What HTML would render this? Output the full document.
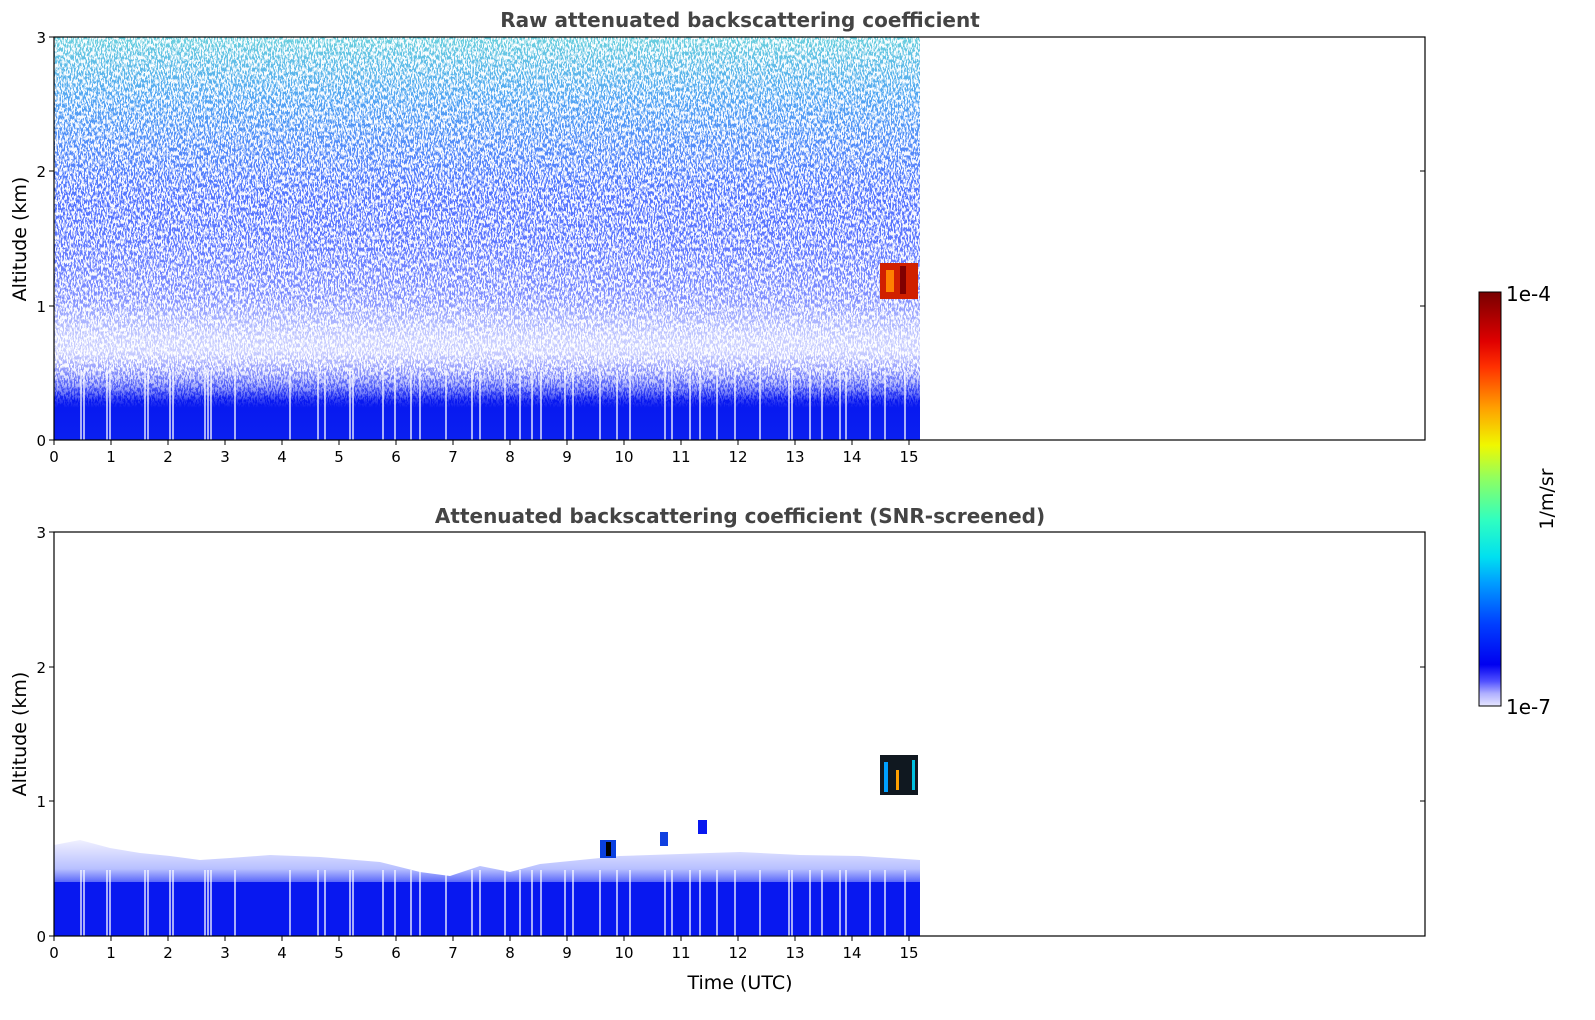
<!DOCTYPE html>
<html><head><meta charset="utf-8"><style>
html,body{margin:0;padding:0;background:#fff;}
svg{display:block;font-family:"DejaVu Sans","Liberation Sans",sans-serif;}
</style></head><body>
<svg width="1595" height="1020" viewBox="0 0 1595 1020" xmlns="http://www.w3.org/2000/svg">
<defs>
<filter id="spk" x="0" y="0" width="100%" height="100%">
<feTurbulence type="fractalNoise" baseFrequency="0.7 0.25" numOctaves="2" seed="3" result="n"/>
<feColorMatrix type="matrix" values="0 0 0 0 1  0 0 0 0 1  0 0 0 0 1  0 0 0 -14 7.6"/>
</filter>
<linearGradient id="tg" x1="0" y1="0" x2="0" y2="1">
<stop offset="0" stop-color="#50c8d8"/>
<stop offset="0.15" stop-color="#2a90f0"/>
<stop offset="0.4" stop-color="#1540ff"/>
<stop offset="0.65" stop-color="#1a35ff"/>
<stop offset="0.78" stop-color="#a0a8ff"/>
<stop offset="0.86" stop-color="#3040f8"/>
<stop offset="0.9" stop-color="#0818f0"/>
<stop offset="1" stop-color="#0a20f0"/>
</linearGradient>
<linearGradient id="wf" x1="0" y1="0" x2="0" y2="1">
<stop offset="0" stop-color="#fff" stop-opacity="0.15"/>
<stop offset="0.5" stop-color="#fff" stop-opacity="0.3"/>
<stop offset="0.75" stop-color="#fff" stop-opacity="0.55"/>
<stop offset="0.86" stop-color="#fff" stop-opacity="0.2"/>
<stop offset="0.9" stop-color="#fff" stop-opacity="0"/>
</linearGradient>
<linearGradient id="sf" x1="0" y1="0" x2="0" y2="1">
<stop offset="0" stop-color="#fff" stop-opacity="1"/>
<stop offset="0.82" stop-color="#fff" stop-opacity="1"/>
<stop offset="0.92" stop-color="#fff" stop-opacity="0"/>
</linearGradient>
<mask id="sm"><rect x="54" y="37" width="866" height="403" fill="url(#sf)"/></mask>
<linearGradient id="bg" x1="0" y1="0" x2="0" y2="1">
<stop offset="0" stop-color="#f0f0ff"/>
<stop offset="0.3" stop-color="#b8c0ff"/>
<stop offset="0.5" stop-color="#3040f8"/>
<stop offset="1" stop-color="#0818f0"/>
</linearGradient>
<linearGradient id="cb" x1="0" y1="1" x2="0" y2="0">
<stop offset="0" stop-color="#e6e6ff"/>
<stop offset="0.03" stop-color="#b0b0ff"/>
<stop offset="0.06" stop-color="#5050ff"/>
<stop offset="0.1" stop-color="#0000f0"/>
<stop offset="0.2" stop-color="#0040ff"/>
<stop offset="0.3" stop-color="#00a0ff"/>
<stop offset="0.36" stop-color="#00e0f0"/>
<stop offset="0.45" stop-color="#30ffc0"/>
<stop offset="0.55" stop-color="#90ff60"/>
<stop offset="0.63" stop-color="#f0f800"/>
<stop offset="0.72" stop-color="#ffa000"/>
<stop offset="0.82" stop-color="#ff3000"/>
<stop offset="0.88" stop-color="#e00000"/>
<stop offset="1" stop-color="#780000"/>
</linearGradient>
</defs>

<!-- TOP PLOT -->
<rect x="54" y="37" width="866" height="403" fill="url(#tg)"/>
<rect x="54" y="37" width="866" height="403" fill="url(#wf)"/>
<g mask="url(#sm)"><rect x="54" y="37" width="866" height="403" fill="#fff" filter="url(#spk)" opacity="0.95"/></g>
<rect x="880" y="263" width="38" height="36" fill="#d02000"/>
<rect x="886" y="270" width="8" height="22" fill="#ff8000"/>
<rect x="900" y="266" width="6" height="28" fill="#800000"/>
<g stroke="#fff" stroke-width="1.3">
<path d="M81 370V440M84 370V440M107 370V440M110 370V440M145 370V440M148 370V440M170 370V440M173 370V440M205 370V440M208 370V440M211 370V440M235 370V440M290 370V440M318 370V440M325 370V440M350 370V440M353 370V440M383 370V440M395 370V440M411 370V440M420 370V440M446 370V440M472 370V440M480 370V440M505 370V440M520 370V440M532 370V440M541 370V440M565 370V440M573 370V440M600 370V440M617 370V440M630 370V440M665 370V440M672 370V440M690 370V440M700 370V440M717 370V440M735 370V440M760 370V440M789 370V440M792 370V440M810 370V440M822 370V440M840 370V440M846 370V440M870 370V440M885 370V440M905 370V440"/>
</g>
<rect x="54" y="37" width="1371" height="403" fill="none" stroke="#000" stroke-width="1.2"/>

<!-- BOTTOM PLOT -->
<path d="M54 845 L80 840 L110 848 L140 853 L170 856 L200 860 L230 858 L270 855 L320 857 L380 862 L420 872 L450 876 L480 866 L510 872 L540 864 L580 860 L620 856 L680 854 L740 852 L800 855 L860 856 L920 860 L920 936 L54 936Z" fill="url(#bg)"/>
<rect x="54" y="882" width="866" height="54" fill="#0818f0"/>
<g stroke="#fff" stroke-width="1.3"><path d="M81 870V936M84 870V936M107 870V936M110 870V936M145 870V936M148 870V936M170 870V936M173 870V936M205 870V936M208 870V936M211 870V936M235 870V936M290 870V936M318 870V936M325 870V936M350 870V936M353 870V936M383 870V936M395 870V936M411 870V936M420 870V936M446 870V936M472 870V936M480 870V936M505 870V936M520 870V936M532 870V936M541 870V936M565 870V936M573 870V936M600 870V936M617 870V936M630 870V936M665 870V936M672 870V936M690 870V936M700 870V936M717 870V936M735 870V936M760 870V936M789 870V936M792 870V936M810 870V936M822 870V936M840 870V936M846 870V936M870 870V936M885 870V936M905 870V936"/></g>
<rect x="600" y="840" width="16" height="18" fill="#0a40e0"/><rect x="606" y="842" width="5" height="14" fill="#000"/>
<rect x="660" y="832" width="8" height="14" fill="#1040e0"/>
<rect x="698" y="820" width="9" height="14" fill="#0818f0"/>
<rect x="880" y="755" width="38" height="40" fill="#101820"/>
<rect x="884" y="762" width="4" height="30" fill="#00a0ff"/><rect x="896" y="770" width="3" height="20" fill="#ffa000"/><rect x="912" y="760" width="3" height="30" fill="#00c0e0"/>
<rect x="54" y="532" width="1371" height="404" fill="none" stroke="#000" stroke-width="1.2"/>

<!-- ticks -->
<g stroke="#000" stroke-width="1">
<path d="M54 440v5M111 440v5M168 440v5M225 440v5M282 440v5M339 440v5M396 440v5M453 440v5M510 440v5M567 440v5M624 440v5M681 440v5M738 440v5M795 440v5M852 440v5M909 440v5"/>
<path d="M54 936v5M111 936v5M168 936v5M225 936v5M282 936v5M339 936v5M396 936v5M453 936v5M510 936v5M567 936v5M624 936v5M681 936v5M738 936v5M795 936v5M852 936v5M909 936v5"/>
<path d="M49 37h5M49 171h5M49 306h5M49 440h5M1420 171h5M1420 306h5"/>
<path d="M49 532h5M49 667h5M49 801h5M49 936h5M1420 667h5M1420 801h5"/>
</g>
<g font-size="15" fill="#000" text-anchor="middle">
<text x="54" y="462">0</text><text x="111" y="462">1</text><text x="168" y="462">2</text><text x="225" y="462">3</text><text x="282" y="462">4</text><text x="339" y="462">5</text><text x="396" y="462">6</text><text x="453" y="462">7</text><text x="510" y="462">8</text><text x="567" y="462">9</text><text x="624" y="462">10</text><text x="681" y="462">11</text><text x="738" y="462">12</text><text x="795" y="462">13</text><text x="852" y="462">14</text><text x="909" y="462">15</text>
<text x="54" y="958">0</text><text x="111" y="958">1</text><text x="168" y="958">2</text><text x="225" y="958">3</text><text x="282" y="958">4</text><text x="339" y="958">5</text><text x="396" y="958">6</text><text x="453" y="958">7</text><text x="510" y="958">8</text><text x="567" y="958">9</text><text x="624" y="958">10</text><text x="681" y="958">11</text><text x="738" y="958">12</text><text x="795" y="958">13</text><text x="852" y="958">14</text><text x="909" y="958">15</text>
</g>
<g font-size="15" fill="#000" text-anchor="end">
<text x="46" y="43">3</text><text x="46" y="177">2</text><text x="46" y="312">1</text><text x="46" y="446">0</text>
<text x="46" y="538">3</text><text x="46" y="673">2</text><text x="46" y="807">1</text><text x="46" y="942">0</text>
</g>
<text x="26" y="239" font-size="19" text-anchor="middle" transform="rotate(-90 26 239)">Altitude (km)</text>
<text x="26" y="734" font-size="19" text-anchor="middle" transform="rotate(-90 26 734)">Altitude (km)</text>
<text x="740" y="989" font-size="19" text-anchor="middle">Time (UTC)</text>
<text x="740" y="27" font-size="20" font-weight="bold" fill="#444" text-anchor="middle">Raw attenuated backscattering coefficient</text>
<text x="740" y="523" font-size="20" font-weight="bold" fill="#444" text-anchor="middle">Attenuated backscattering coefficient (SNR-screened)</text>

<!-- colorbar -->
<rect x="1479" y="292" width="22" height="414" fill="url(#cb)" stroke="#000" stroke-width="1"/>
<text x="1506" y="301" font-size="20">1e-4</text>
<text x="1506" y="714" font-size="20">1e-7</text>
<text x="1553" y="499" font-size="19" text-anchor="middle" transform="rotate(-90 1553 499)">1/m/sr</text>
</svg>
</body></html>
